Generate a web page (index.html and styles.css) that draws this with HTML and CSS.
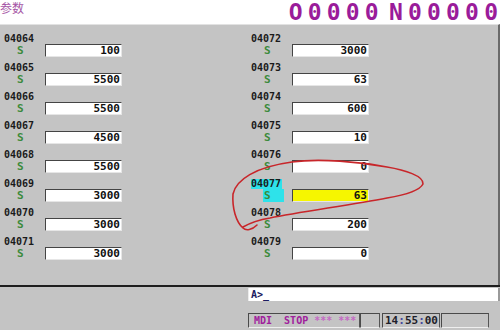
FILE: index.html
```html
<!DOCTYPE html>
<html>
<head>
  <title>参数</title>
  <link rel="stylesheet" href="styles.css">
</head>
<body>
  <div class="screen">
    <div class="top">
      <span class="title">参数</span>
      <span class="prog"><span>O0000</span><span>N0000<b>0</b></span></span>
    </div>

    <div class="panel">
      <div class="col">
        <div class="item"><div class="num">04064</div><div class="row"><span class="s">S</span><span class="val">100</span></div></div>
        <div class="item"><div class="num">04065</div><div class="row"><span class="s">S</span><span class="val">5500</span></div></div>
        <div class="item"><div class="num">04066</div><div class="row"><span class="s">S</span><span class="val">5500</span></div></div>
        <div class="item"><div class="num">04067</div><div class="row"><span class="s">S</span><span class="val">4500</span></div></div>
        <div class="item"><div class="num">04068</div><div class="row"><span class="s">S</span><span class="val">5500</span></div></div>
        <div class="item"><div class="num">04069</div><div class="row"><span class="s">S</span><span class="val">3000</span></div></div>
        <div class="item"><div class="num">04070</div><div class="row"><span class="s">S</span><span class="val">3000</span></div></div>
        <div class="item"><div class="num">04071</div><div class="row"><span class="s">S</span><span class="val">3000</span></div></div>
      </div>
      <div class="col">
        <div class="item"><div class="num">04072</div><div class="row"><span class="s">S</span><span class="val">3000</span></div></div>
        <div class="item"><div class="num">04073</div><div class="row"><span class="s">S</span><span class="val">63</span></div></div>
        <div class="item"><div class="num">04074</div><div class="row"><span class="s">S</span><span class="val">600</span></div></div>
        <div class="item"><div class="num">04075</div><div class="row"><span class="s">S</span><span class="val">10</span></div></div>
        <div class="item"><div class="num">04076</div><div class="row"><span class="s">S</span><span class="val">0</span></div></div>
        <div class="item active"><div class="num">04077</div><div class="row"><span class="s">S</span><span class="val">63</span></div></div>
        <div class="item"><div class="num">04078</div><div class="row"><span class="s">S</span><span class="val">200</span></div></div>
        <div class="item"><div class="num">04079</div><div class="row"><span class="s">S</span><span class="val">0</span></div></div>
      </div>
    </div>

    <div class="bottom">
      <div class="blank"></div>
      <div class="side">
        <div class="cmd">A&gt;_</div>
        <div class="status">
          <span class="box mode">MDI  STOP<span class="stars"> *** ***</span></span>
          <span class="box small"></span>
          <span class="box clock">14<i>:</i>55<i>:</i>00</span>
          <span class="box last"></span>
        </div>
      </div>
    </div>

    <!-- hand drawn circle around 04077 -->
    <svg class="mark" width="500" height="330" viewBox="0 0 500 330">
      <path d="M257 225 C252 230 246 231 243 228 C236 222 232 208 233 194 C236 180 255 167 292 162 C320 158 360 162 387 167 C405 170 424 176 423 184 C420 190 405 195 387 198 C350 205 300 212 270 218 C258 220 250 223 243 227" fill="none" stroke="#c8262a" stroke-width="1.6" stroke-linecap="round"/>
    </svg>
  </div>
</body>
</html>
```

FILE: styles.css
```css
body { margin: 0; background: #c4c4c4; font-family: "DejaVu Sans Mono", monospace; }
.screen { position: relative; width: 500px; height: 330px; overflow: hidden; background: #c4c4c4; }

.top { height: 24px; background: #fff; display: flex; justify-content: space-between; align-items: flex-start; }
.title { font-family: "Noto Sans CJK SC", sans-serif; font-size: 12px; line-height: 16px; color: #a555a5; }
.prog { display: flex; gap: 5px; font-size: 23px; line-height: 24px; font-weight: bold; color: #9a1c9a; letter-spacing: 5.2px; margin-right: 2px; }
.prog b { letter-spacing: 0; }

.panel { height: 261px; box-sizing: border-box; padding: 9px 0 0 4px; border-top: 1px solid #e2e2e2; border-right: 2px solid #6a6a6a; display: grid; grid-template-columns: 247px 247px; }
.item { height: 29px; }
.num { width: fit-content; font-size: 10px; line-height: 10px; height: 10px; font-weight: bold; color: #1a1a1a; padding-right: 1px; }
.row { display: flex; height: 13px; }
.s { width: 21px; margin-left: 12px; padding-left: 1px; box-sizing: border-box; font-size: 11px; line-height: 13px; font-weight: bold; color: #3b8a3b; }
.val { width: 77px; margin-left: 8px; height: 13px; box-sizing: border-box; background: #fff; border-top: 1px solid #444; border-left: 1px solid #444; border-right: 1px solid #e6e6e6; border-bottom: 1px solid #e6e6e6; text-align: right; padding-right: 1px; font-size: 11px; line-height: 12px; font-weight: bold; color: #111; }
.active .num { background: #2ee2ea; }
.active .s { background: #2ee2ea; }
.active .val { background: #f6f600; }

.bottom { border-top: 2px solid #1e1e1e; height: 43px; box-sizing: border-box; display: grid; grid-template-columns: 248px 1fr; }
.side { display: flex; flex-direction: column; }
.cmd { height: 13px; background: #fff; border-left: 1px solid #ececec; border-right: 2px solid #9a9a9a; font-size: 10px; line-height: 13px; font-weight: bold; color: #1c1c60; padding-left: 2px; margin-top: 1px; }
.status { display: flex; margin-top: 12px; height: 15px; }
.box { height: 15px; box-sizing: border-box; border-top: 1px solid #4a4a4a; border-left: 1px solid #4a4a4a; border-right: 1px solid #555; border-bottom: 1px solid #eee; font-size: 10px; line-height: 13px; font-weight: bold; white-space: pre; }
.mode { width: 112px; padding-left: 5px; color: #a0209c; }
.stars { color: #c46ac4; }
.small { width: 20px; }
.clock { width: 58px; margin-left: 2px; padding-left: 2px; font-size: 11px; color: #1e1e2a; }
.clock i { font-style: normal; color: #4848a0; }
.last { width: 48px; margin-left: 1px; }

.mark { position: absolute; left: 0; top: 0; pointer-events: none; }
```
